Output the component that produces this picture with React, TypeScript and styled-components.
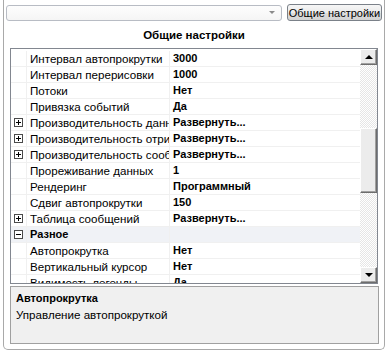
import React from "react";
import styled, { createGlobalStyle } from "styled-components";

const Global = createGlobalStyle`
  html, body { margin: 0; padding: 0; background: #ffffff; }
  body { font-family: "Liberation Sans", Arial, sans-serif; }
`;

const Frame = styled.div`
  box-sizing: border-box;
  width: 382px;
  height: 350px;
  margin: 0 0 0 3px;
  border: 1px solid #a9a9a9;
  border-top: none;
  border-radius: 0 0 5px 5px;
  padding: 4px 2px 0 2px;
  display: flex;
  flex-direction: column;
  font-family: "Liberation Sans", Arial, sans-serif;
  font-size: 11px;
  color: #000;
`;

const TopBar = styled.div`
  display: flex;
  align-items: center;
  gap: 5px;
  height: 17px;
`;

const Combo = styled.div`
  box-sizing: border-box;
  width: 278px;
  height: 16px;
  border: 1px solid #b8bcc4;
  border-radius: 3px;
  background: linear-gradient(#fdfdfd, #f5f5f5);
  display: flex;
  justify-content: flex-end;
  align-items: center;
  padding-right: 6px;
`;

const ComboArrow = styled.div`
  width: 0;
  height: 0;
  border-left: 3px solid transparent;
  border-right: 3px solid transparent;
  border-top: 3px solid #8a8a8a;
`;

const Button = styled.div`
  box-sizing: border-box;
  width: 96px;
  height: 17px;
  border: 1px solid #7b8189;
  border-radius: 3px;
  background: linear-gradient(#f6f6f6 0%, #ebebeb 50%, #dcdcdc 51%, #d4d4d4 100%);
  display: flex;
  align-items: center;
  justify-content: center;
  font-size: 11px;
  white-space: nowrap;
`;

const Title = styled.div`
  height: 27px;
  display: flex;
  align-items: center;
  justify-content: center;
  font-weight: bold;
  font-size: 11.5px;
  padding-top: 1px;
  box-sizing: border-box;
`;

const Grid = styled.div`
  box-sizing: border-box;
  width: 368px;
  height: 236px;
  margin-left: 4px;
  border: 1px solid #828790;
  display: flex;
  overflow: hidden;
`;

const Rows = styled.div`
  flex: 1;
  overflow: hidden;
  background: #fff;
  padding-top: 2px;
`;

const Row = styled.div<{ $cat?: boolean }>`
  box-sizing: border-box;
  height: 16px;
  display: grid;
  grid-template-columns: 16px 143px 1fr;
  align-items: center;
  border-bottom: 1px solid #f0f0f0;
  background: ${(p) => (p.$cat ? "#f0f2f6" : "#fff")};
`;

const Gutter = styled.div`
  height: 100%;
  display: flex;
  align-items: center;
  justify-content: center;
  border-right: 1px solid #f0f0f0;
  box-sizing: border-box;
`;

const Expander = styled.div`
  box-sizing: border-box;
  width: 9px;
  height: 9px;
  border: 1px solid #4a4a4a;
  background: #fff;
  position: relative;
  &::before {
    content: "";
    position: absolute;
    left: 1px;
    top: 3px;
    width: 5px;
    height: 1px;
    background: #000;
  }
`;

const PlusBox = styled(Expander)`
  &::after {
    content: "";
    position: absolute;
    left: 3px;
    top: 1px;
    width: 1px;
    height: 5px;
    background: #000;
  }
`;

const Name = styled.div<{ $bold?: boolean }>`
  padding-left: 3px;
  height: 100%;
  line-height: 15px;
  white-space: nowrap;
  overflow: hidden;
  text-overflow: clip;
  font-size: ${(p) => (p.$bold ? "11px" : "11.6px")};
  font-weight: ${(p) => (p.$bold ? "bold" : "normal")};
  border-right: 1px solid #f0f0f0;
  box-sizing: border-box;
`;

const Value = styled.div`
  padding-left: 3px;
  line-height: 15px;
  font-weight: bold;
  white-space: nowrap;
  overflow: hidden;
`;

const ScrollBar = styled.div`
  width: 17px;
  display: flex;
  flex-direction: column;
  background-color: #f4f4f4;
  background-image: repeating-conic-gradient(#ffffff 0% 25%, #e6e6e6 0% 50%);
  background-size: 2px 2px;
`;

const SBButton = styled.div`
  box-sizing: border-box;
  width: 17px;
  height: 16px;
  background: #ececec;
  border-top: 1px solid #fff;
  border-left: 1px solid #fff;
  border-right: 1px solid #6d6d6d;
  border-bottom: 1px solid #6d6d6d;
  box-shadow: inset -1px -1px 0 #a0a0a0;
  display: flex;
  align-items: center;
  justify-content: center;
`;

const TrackSpace = styled.div<{ $h: number }>`
  height: ${(p) => p.$h}px;
`;

const Thumb = styled(SBButton)`
  height: 65px;
`;

const Tri = styled.div<{ $up?: boolean }>`
  width: 0;
  height: 0;
  border-left: 4px solid transparent;
  border-right: 4px solid transparent;
  ${(p) => (p.$up ? "border-bottom: 4px solid #000;" : "border-top: 4px solid #000;")}
`;

const Desc = styled.div`
  box-sizing: border-box;
  width: 369px;
  height: 58px;
  margin: 2px 0 0 4px;
  border: 1px solid #a0a0a0;
  background: #f0f0f0;
  padding: 4px 5px;
`;

const DescTitle = styled.div`
  font-weight: bold;
  line-height: 15px;
`;

const DescText = styled.div`
  line-height: 15px;
  margin-top: 1px;
  font-size: 11.6px;
`;

type Item = { name: string; value?: string; expand?: "plus" | "minus"; cat?: boolean };

const items: Item[] = [
  { name: "Интервал автопрокрутки", value: "3000" },
  { name: "Интервал перерисовки", value: "1000" },
  { name: "Потоки", value: "Нет" },
  { name: "Привязка событий", value: "Да" },
  { name: "Производительность данных", value: "Развернуть...", expand: "plus" },
  { name: "Производительность отрисовки", value: "Развернуть...", expand: "plus" },
  { name: "Производительность сообщений", value: "Развернуть...", expand: "plus" },
  { name: "Прореживание данных", value: "1" },
  { name: "Рендеринг", value: "Программный" },
  { name: "Сдвиг автопрокрутки", value: "150" },
  { name: "Таблица сообщений", value: "Развернуть...", expand: "plus" },
  { name: "Разное", expand: "minus", cat: true },
  { name: "Автопрокрутка", value: "Нет" },
  { name: "Вертикальный курсор", value: "Нет" },
  { name: "Видимость легенды", value: "Да" },
];

export default function App() {
  return (
    <>
      <Global />
      <Frame>
        <TopBar>
          <Combo>
            <ComboArrow />
          </Combo>
          <Button>Общие настройки</Button>
        </TopBar>
        <Title>Общие настройки</Title>
        <Grid>
          <Rows>
            {items.map((it, i) => (
              <Row key={i} $cat={it.cat}>
                <Gutter>
                  {it.expand === "plus" && <PlusBox />}
                  {it.expand === "minus" && <Expander />}
                </Gutter>
                <Name $bold={it.cat}>{it.name}</Name>
                <Value>{it.value ?? ""}</Value>
              </Row>
            ))}
          </Rows>
          <ScrollBar>
            <SBButton>
              <Tri $up />
            </SBButton>
            <TrackSpace $h={63} />
            <Thumb />
            <TrackSpace $h={74} />
            <SBButton>
              <Tri />
            </SBButton>
          </ScrollBar>
        </Grid>
        <Desc>
          <DescTitle>Автопрокрутка</DescTitle>
          <DescText>Управление автопрокруткой</DescText>
        </Desc>
      </Frame>
    </>
  );
}
